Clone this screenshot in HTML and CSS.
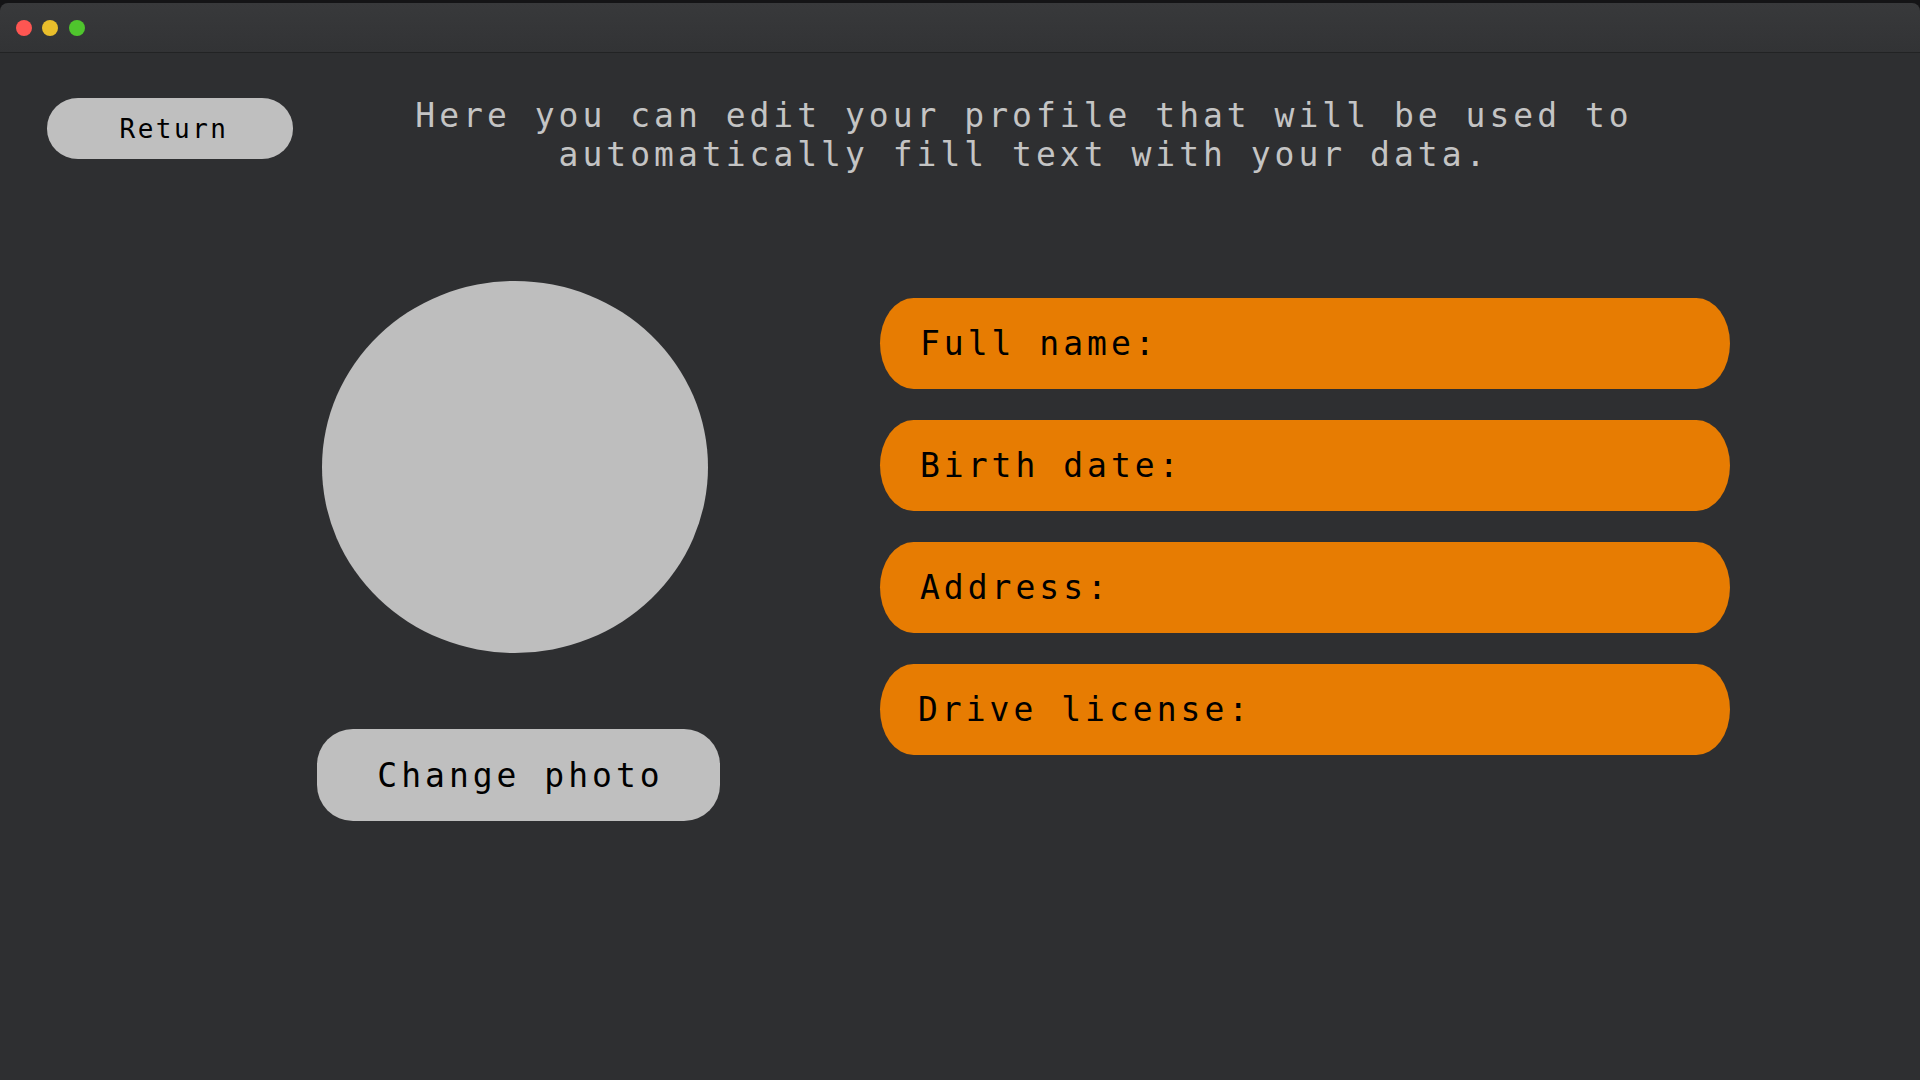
FILE: index.html
```html
<!DOCTYPE html>
<html lang="en">
<head>
<meta charset="utf-8">
<title>Profile</title>
<link rel="stylesheet" href="styles.css">
</head>
<body>
<div class="window">
  <div class="titlebar">
    <span class="dot dot-red"></span>
    <span class="dot dot-yellow"></span>
    <span class="dot dot-green"></span>
  </div>
  <div class="content">
    <div class="top-row">
      <button class="btn btn-return">Return</button>
      <p class="intro">Here you can edit your profile that will be used to<br>automatically fill text with your data.</p>
    </div>
    <div class="main-row">
      <div class="photo-col">
        <div class="avatar"></div>
        <button class="btn btn-photo">Change photo</button>
      </div>
      <div class="fields">
        <div class="field">Full name:</div>
        <div class="field">Birth date:</div>
        <div class="field">Address:</div>
        <div class="field field-drive">Drive license:</div>
      </div>
    </div>
  </div>
</div>
</body>
</html>
```
FILE: styles.css
```css
* { box-sizing: border-box; }
html, body {
  margin: 0;
  padding: 0;
  width: 1920px;
  height: 1080px;
  overflow: hidden;
  background: #141416;
}
.window {
  width: 1920px;
  height: 1080px;
  padding-top: 3px;
  display: flex;
  flex-direction: column;
}
.titlebar {
  height: 50px;
  flex: none;
  background: linear-gradient(#38393b, #323335);
  border-radius: 8px 8px 0 0;
  border-bottom: 1px solid #222324;
  display: flex;
  align-items: center;
  padding-left: 16px;
  gap: 10px;
}
.dot {
  width: 16px;
  height: 16px;
  border-radius: 50%;
  display: block;
}
.dot-red { background: #fe5652; }
.dot-yellow { background: #e9be2b; }
.dot-green { background: #4fc52d; margin-left: 1px; }
.content {
  flex: 1;
  background: #2e2f31;
  font-family: "DejaVu Sans Mono", "Liberation Mono", monospace;
  padding: 43px 47px 0 47px;
}
.top-row {
  display: flex;
  align-items: flex-start;
}
.btn {
  border: none;
  background: #bfbfbf;
  color: #000;
  font-family: "DejaVu Sans Mono", "Liberation Mono", monospace;
  cursor: pointer;
  padding: 0;
}
.btn-return {
  width: 246px;
  height: 61px;
  margin-top: 2px;
  border-radius: 31px / 30px;
  font-size: 26px;
  letter-spacing: 2.5px;
  text-indent: 8px;
  flex: none;
}
.intro {
  flex: 1;
  margin: 0 118px 0 0;
  text-align: center;
  color: #c4c4c4;
  font-size: 33px;
  line-height: 39px;
  letter-spacing: 4px;
}
.main-row {
  display: flex;
  align-items: flex-start;
  margin-top: 107px;
  gap: 160px;
  padding-left: 270px;
}
.photo-col {
  width: 403px;
  display: flex;
  flex-direction: column;
  align-items: flex-start;
}
.avatar {
  width: 386px;
  height: 372px;
  border-radius: 50%;
  background: #bebebe;
  margin-left: 5px;
}
.btn-photo {
  margin-top: 76px;
  width: 403px;
  height: 92px;
  border-radius: 36px;
  font-size: 33px;
  letter-spacing: 4px;
  text-indent: 4px;
}
.fields {
  margin-top: 17px;
  width: 850px;
  display: flex;
  flex-direction: column;
  gap: 31px;
}
.field {
  height: 91px;
  background: #e77c02;
  border-radius: 34px / 46px;
  color: #000;
  font-size: 33px;
  letter-spacing: 4px;
  display: flex;
  align-items: center;
  padding-left: 40px;
}
.field-drive { padding-left: 38px; }
```
